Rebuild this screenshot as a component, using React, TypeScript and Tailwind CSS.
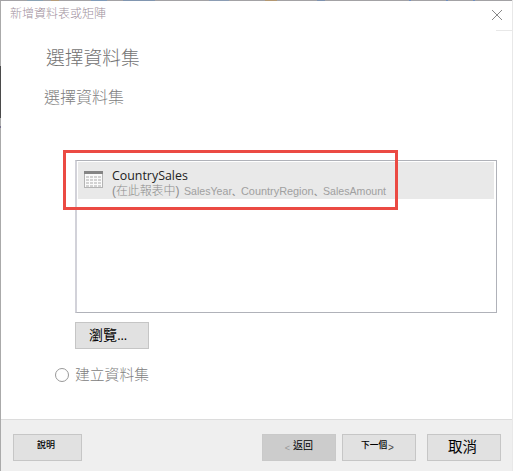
import type { ReactNode } from "react";

const cjk = "font-['Liberation_Sans','Noto_Sans_CJK_TC',sans-serif]";
const comma = "font-['Noto_Sans_CJK_SC',sans-serif]";

function Button({ className, children }: { className: string; children: ReactNode }) {
  return (
    <button
      className={`flex h-[27px] shrink-0 items-start border whitespace-nowrap text-black ${className}`}
    >
      {children}
    </button>
  );
}

function TableIcon() {
  return (
    <svg className="h-[18px] w-5 shrink-0" viewBox="0 0 20 18" shapeRendering="crispEdges">
      <rect x="0.5" y="0.5" width="18" height="16" fill="#fafafa" stroke="#b4b4b4" />
      <rect x="0" y="0" width="19" height="3" fill="#858585" />
      <path
        d="M2 5.5H17M2 8.5H17M2 11.5H17M2 14.5H17"
        stroke="#d2d2d2"
        strokeWidth="2"
        strokeDasharray="3 1"
      />
    </svg>
  );
}

export default function App() {
  return (
    <div
      className={`flex h-[471px] w-[513px] flex-col overflow-hidden border-r border-r-[#e8e8e8] bg-white font-light ${cjk}`}
    >
      <div className="flex h-px shrink-0 bg-[#a3a2a5]">
        <span className="ml-[27px] w-4 bg-[#8aa2b3]" />
        <span className="ml-2 w-2 bg-[#b69c78]" />
        <span className="ml-8 w-4 bg-[#7f9ab8]" />
        <span className="ml-4 w-8 bg-[#8196b0]" />
        <span className="ml-[54px] w-5 bg-[#8c9db4]" />
        <span className="ml-[36px] w-3 bg-[#b39872]" />
        <span className="ml-10 w-2 bg-[#7e92af]" />
        <span className="ml-[84px] w-0.5 bg-[#6f8fc0]" />
        <span className="ml-[35px] w-0.5 bg-[#6f8fc0]" />
        <span className="ml-[25px] w-0.5 bg-[#6f8fc0]" />
      </div>
      <div className="flex min-h-0 flex-1">
        <div className="flex w-px shrink-0 flex-col bg-[#aaaaaa]">
          <span className="mt-[65px] h-[52px] bg-[#4a4a4a]" />
          <span className="mt-2 h-0.5 bg-[#76718d]" />
        </div>
        <div className="flex min-w-0 flex-1 flex-col">
          <header className="flex h-[29px] shrink-0 justify-between">
            <h1 className="mt-1 ml-[9px] text-[12px] leading-[18px] text-[#a08f9c]">新增資料表或矩陣</h1>
            <svg className="mt-[9px] mr-[10px] h-[10px] w-[10px]" viewBox="0 0 10 10">
              <path d="M0 0L10 10M10 0L0 10" stroke="#888" strokeWidth="1" />
            </svg>
          </header>
          <div className="ml-auto h-px w-4 shrink-0 bg-[#e8e8e8]" />
          <main className="flex h-[388px] shrink-0 flex-col">
            <h2 className="mt-[13px] ml-[45px] h-7 text-[18.8px] leading-[29px] text-[#737373]">選擇資料集</h2>
            <h3 className="mt-[14px] ml-[43px] h-6 text-[16px] leading-[23px] text-[#808080]">選擇資料集</h3>
            <div className="relative mt-[50px] ml-[74px] h-[153px] w-[422px] shrink-0 border border-l-2 border-[#b0b2b9] border-l-[#d2d2d9] pt-px pr-[2px] pl-px">
              <div className="flex h-[37px] bg-[#e9e9e9] pt-[9px] pl-[6px]">
                <TableIcon />
                <div className="ml-2 whitespace-nowrap">
                  <div className="h-[13px] font-['Open_Sans',sans-serif] text-[12.4px] leading-[10px] font-normal text-[#222]">
                    CountrySales
                  </div>
                  <div className="flex text-[10.6px] leading-[14px] text-[#a0a0a0]">
                    <span className="w-[72px] text-[12px] tracking-[-0.1px] text-[#8c8c8c]">(在此報表中)</span>
                    <span className="w-[48px]">SalesYear</span>
                    <span className={`w-[9px] text-[8.5px] font-medium text-[#8c8c8c] ${comma}`}>、</span>
                    <span className="w-[73px] text-[10.9px]">CountryRegion</span>
                    <span className={`w-[9px] text-[8.5px] font-medium text-[#8c8c8c] ${comma}`}>、</span>
                    <span className="text-[10.6px]">SalesAmount</span>
                  </div>
                </div>
              </div>
              <div className="pointer-events-none absolute -top-[11px] -left-[14px] h-[60px] w-[335px] border-3 border-[#eb4a43]" />
            </div>
            <Button className="mt-[9px] ml-[74px] w-[74px] border-[#c5c5c5] bg-[#e1e1e1] pt-[3px] pl-[13px] text-[14px] leading-[19px] font-normal">
              瀏覽<span className="tracking-[-0.7px]">...</span>
            </Button>
            <label className="mt-[15px] ml-[54px] flex h-[22px] items-center">
              <span className="h-[14px] w-[14px] rounded-full border-[1.5px] border-[#999]" />
              <span className="ml-[6px] text-[14.8px] leading-[22px] text-[#808080]">建立資料集</span>
            </label>
          </main>
          <footer className="flex flex-1 border-t border-[#dcdcdc] bg-[#efefef] pt-[14px]">
            <Button className="ml-3 w-[69px] border-[#c6c6c6] bg-[#e1e1e1] pt-[1px] pl-[23px] text-[9px] leading-[18px] font-medium">
              說明
            </Button>
            <Button className="ml-[180px] w-[74px] border-[#c9c9c9] bg-[#cccccc] pt-[2px] pl-[19px] text-[10px] leading-[18px] font-normal">
              <span className="mt-[2px] w-[11px] text-[9px] text-[#999]">&lt;</span>
              返回
            </Button>
            <Button className="ml-[6px] w-[74px] border-[#c6c6c6] bg-[#e1e1e1] pt-[1px] pl-[18px] text-[8.7px] leading-[18px] font-medium">
              下一個
              <span className="mt-[3px] ml-px text-[10px] text-[#444]">&gt;</span>
            </Button>
            <Button className="ml-[11px] w-[74px] border-[#c6c6c6] bg-[#e1e1e1] pt-[3px] pl-[20px] text-[14.5px] leading-[19px] font-normal">
              取消
            </Button>
          </footer>
        </div>
      </div>
    </div>
  );
}
